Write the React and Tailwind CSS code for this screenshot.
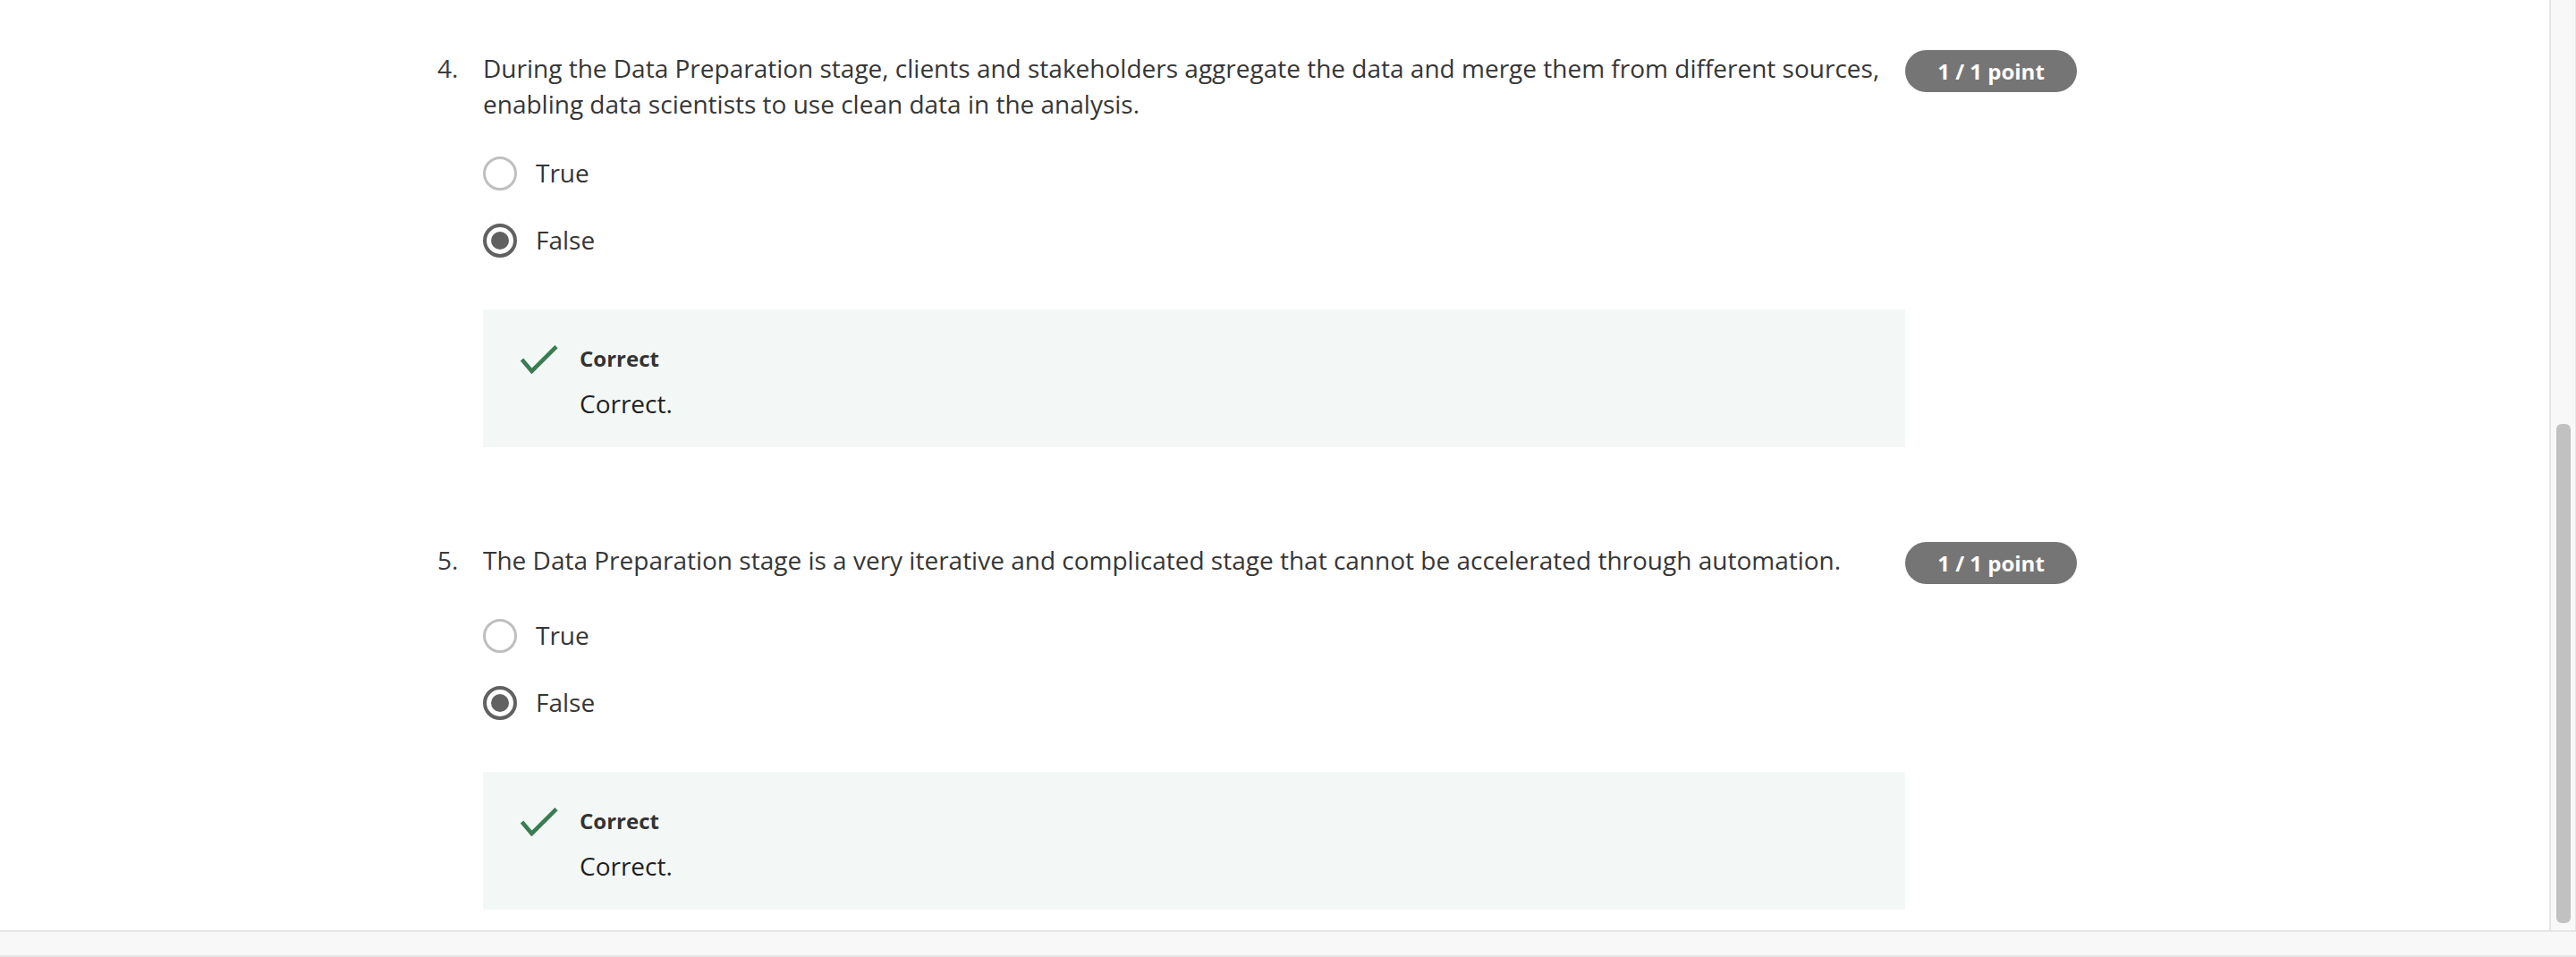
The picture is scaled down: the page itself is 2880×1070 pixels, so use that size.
import React from "react";

function Radio({ checked }) {
  if (checked) {
    return (
      <span className="flex h-[38px] w-[38px] shrink-0 items-center justify-center rounded-full border-[4px] border-[#616161] bg-white">
        <span className="h-[20px] w-[20px] rounded-full bg-[#616161]" />
      </span>
    );
  }
  return <span className="h-[38px] w-[38px] shrink-0 rounded-full border-[3px] border-[#bfbfbf] bg-white" />;
}

function Check() {
  return (
    <svg width="42" height="32" viewBox="0 0 42 32" className="shrink-0">
      <path d="M1.5 16 L12.5 29 L40 1.5" fill="none" stroke="#3a7d53" strokeWidth="4.6" strokeLinecap="butt" strokeLinejoin="miter" />
    </svg>
  );
}

function Question({ num, text }) {
  return (
    <div className="grid grid-cols-[51px_1590px_192px]">
      <div className="text-[28px] leading-[40px] text-[#3b3b3b]">{num}.</div>
      <div className="flex flex-col">
        <div className="min-h-[47px] pr-[28px] text-[28px] leading-[40px] text-[#363636]">{text}</div>
        <div className="mt-[39px] flex flex-col gap-[37px]">
          <div className="flex h-[38px] items-center gap-[21px]">
            <Radio checked={false} />
            <span className="-mt-[3px] text-[28px] leading-[40px] text-[#363636]">True</span>
          </div>
          <div className="flex h-[38px] items-center gap-[21px]">
            <Radio checked={true} />
            <span className="-mt-[3px] text-[28px] leading-[40px] text-[#363636]">False</span>
          </div>
        </div>
        <div className="mt-[58px] flex h-[154px] bg-[#f3f8f6] pl-[42px] pt-[40px]">
          <Check />
          <div className="ml-[24px] flex flex-col">
            <div className="-mt-[1px] text-[24px] font-bold leading-[32px] text-[#333333]">Correct</div>
            <div className="mt-[14px] text-[28px] leading-[40px] text-[#1f1f1f]">Correct.</div>
          </div>
        </div>
      </div>
      <div>
        <div className="flex h-[47px] w-[192px] items-center justify-center rounded-full bg-[#757575] text-[24px] font-bold text-white">
          1 / 1 point
        </div>
      </div>
    </div>
  );
}

export default function App() {
  return (
    <div className="flex h-[1070px] w-full flex-col overflow-hidden bg-[#f8f8f8]" style={{ fontFamily: "'Open Sans', 'Noto Sans', sans-serif" }}>
      <div className="flex h-[1040px] w-full">
        <div className="h-full flex-1 border-r-[2px] border-[#e6e6e6] bg-white">
          <div className="flex flex-col gap-[106px] pl-[489px] pt-[56px]">
            <Question
              num="4"
              text="During the Data Preparation stage, clients and stakeholders aggregate the data and merge them from different sources, enabling data scientists to use clean data in the analysis."
            />
            <Question
              num="5"
              text="The Data Preparation stage is a very iterative and complicated stage that cannot be accelerated through automation."
            />
          </div>
        </div>
        <div className="flex h-full w-[28px] flex-col items-center border-r border-[#e6e6e6] bg-[#f8f8f8] pt-[474px]">
          <div className="h-[558px] w-[16px] rounded-[6px] bg-[#c1c1c1]" />
        </div>
      </div>
      <div className="h-[30px] w-full border-t-[2px] border-b-[2px] border-[#e6e6e6] bg-[#f8f8f8]" />
    </div>
  );
}
